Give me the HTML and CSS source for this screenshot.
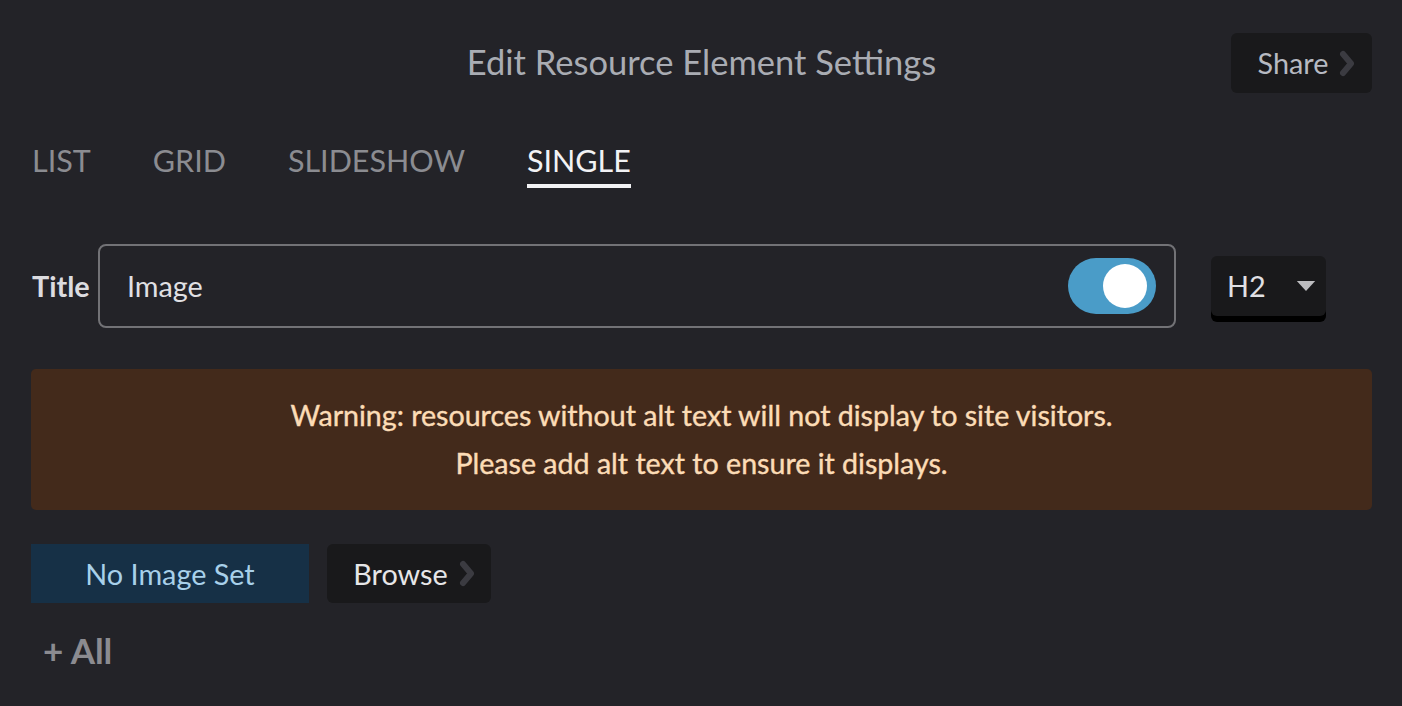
FILE: index.html
```html
<!DOCTYPE html>
<html lang="en">
<head>
<meta charset="utf-8" />
<title>Edit Resource Element Settings</title>
<link rel="stylesheet" href="styles.css">
</head>
<body>
<div class="panel">
	<header class="head">
		<span></span>
		<h1>Edit Resource Element Settings</h1>
		<div class="head-right">
			<button class="btn-dark share">Share <svg class="chev" viewBox="0 0 16 27" width="16" height="27"><path d="M4 4l8 9.5-8 9.5" /></svg></button>
		</div>
	</header>

	<nav class="tabs">
		<a>LIST</a>
		<a>GRID</a>
		<a>SLIDESHOW</a>
		<a class="active">SINGLE</a>
	</nav>

	<div class="title-row">
		<label class="lbl">Title</label>
		<div class="field">
			<span class="field-text">Image</span>
			<span class="toggle"><span class="knob"></span></span>
		</div>
		<div class="select">
			<span>H2</span>
			<svg class="caret" viewBox="0 0 20 12" width="20" height="11"><path d="M0 0h20l-10 11z" /></svg>
		</div>
	</div>

	<div class="warning">
		<p>Warning: resources without alt text will not display to site visitors.</p>
		<p>Please add alt text to ensure it displays.</p>
	</div>

	<div class="image-row">
		<div class="no-image">No Image Set</div>
		<button class="btn-dark browse">Browse <svg class="chev" viewBox="0 0 16 27" width="16" height="27"><path d="M4 4l8 9.5-8 9.5" /></svg></button>
	</div>

	<div class="add-all">+ All</div>
</div>
</body>
</html>
```

FILE: styles.css
```css
*{box-sizing:border-box;}
html, body{margin:0; padding:0; height:100%; background:#232328;}
body{font-family:Lato, "Open Sans", sans-serif; color:#e3e3e6;}
.panel{padding:33px 30px 0 31px;}

.head{display:grid; grid-template-columns:1fr auto 1fr; align-items:center; height:60px;}
.head h1{margin:0; font-size:34.5px; font-weight:400; color:#a9acb3; position:relative; top:-2px;}
.head-right{display:flex; justify-content:flex-end;}

.btn-dark{display:inline-flex; align-items:center; justify-content:center; gap:11px; border:none; background:#19191b; border-radius:6px; font-family:inherit; font-size:28.8px; cursor:pointer;}
.btn-dark .chev{fill:none; stroke:#3b3b41; stroke-width:6; stroke-linecap:round; stroke-linejoin:round;}
.share{width:141px; height:60px; color:#b7bac2; padding:0 0 0 10px;}
.browse{width:164px; height:59px; color:#e6e6e8; padding:0 0 0 10px;}

.tabs{display:flex; gap:62px; margin-top:49px; padding-left:1px;}
.tabs a{font-size:30.5px; color:#8b8c91; padding-bottom:6px; border-bottom:4px solid transparent;}
.tabs a.active{color:#f2f2f4; border-bottom-color:#f2f2f4;}

.title-row{display:flex; align-items:center; margin-top:56px;}
.lbl{font-size:28.8px; font-weight:700; color:#dcdce0; width:67px; padding-left:1px;}
.field{width:1078px; height:84px; border:2px solid #727276; border-radius:8px; display:flex; align-items:center; justify-content:space-between; padding:0 18px 0 27px;}
.field-text{font-size:28.8px; color:#e0e0e4;}
.toggle{width:88px; height:56px; border-radius:28px; background:#4a9cc8; display:flex; align-items:center; justify-content:flex-end; padding-right:9px;}
.knob{width:44px; height:44px; border-radius:50%; background:#fff;}
.select{margin-left:35px; width:115px; height:60px; background:#19191b; border-radius:6px; box-shadow:0 6px 0 #000; display:flex; align-items:center; justify-content:space-between; padding:0 10px 0 16px; font-size:28.8px; color:#e0e0e4;}
.caret{fill:#bdbdc0;}

.warning{margin-top:41px; background:#432a1b; border-radius:5px; height:141px; display:flex; flex-direction:column; justify-content:center; text-align:center; color:#fcdcb6; font-size:28.6px; -webkit-text-stroke:0.4px #fcdcb6; padding-bottom:2px;}
.warning p{margin:0; line-height:48px;}

.image-row{display:flex; align-items:center; gap:18px; margin-top:34px;}
.no-image{width:278px; height:59px; background:#163046; color:#a8d0ea; font-size:28.8px; display:flex; align-items:center; justify-content:center;}

.add-all{margin-top:26px; padding-left:12px; font-size:35px; font-weight:700; color:#8b8b90;}
```
